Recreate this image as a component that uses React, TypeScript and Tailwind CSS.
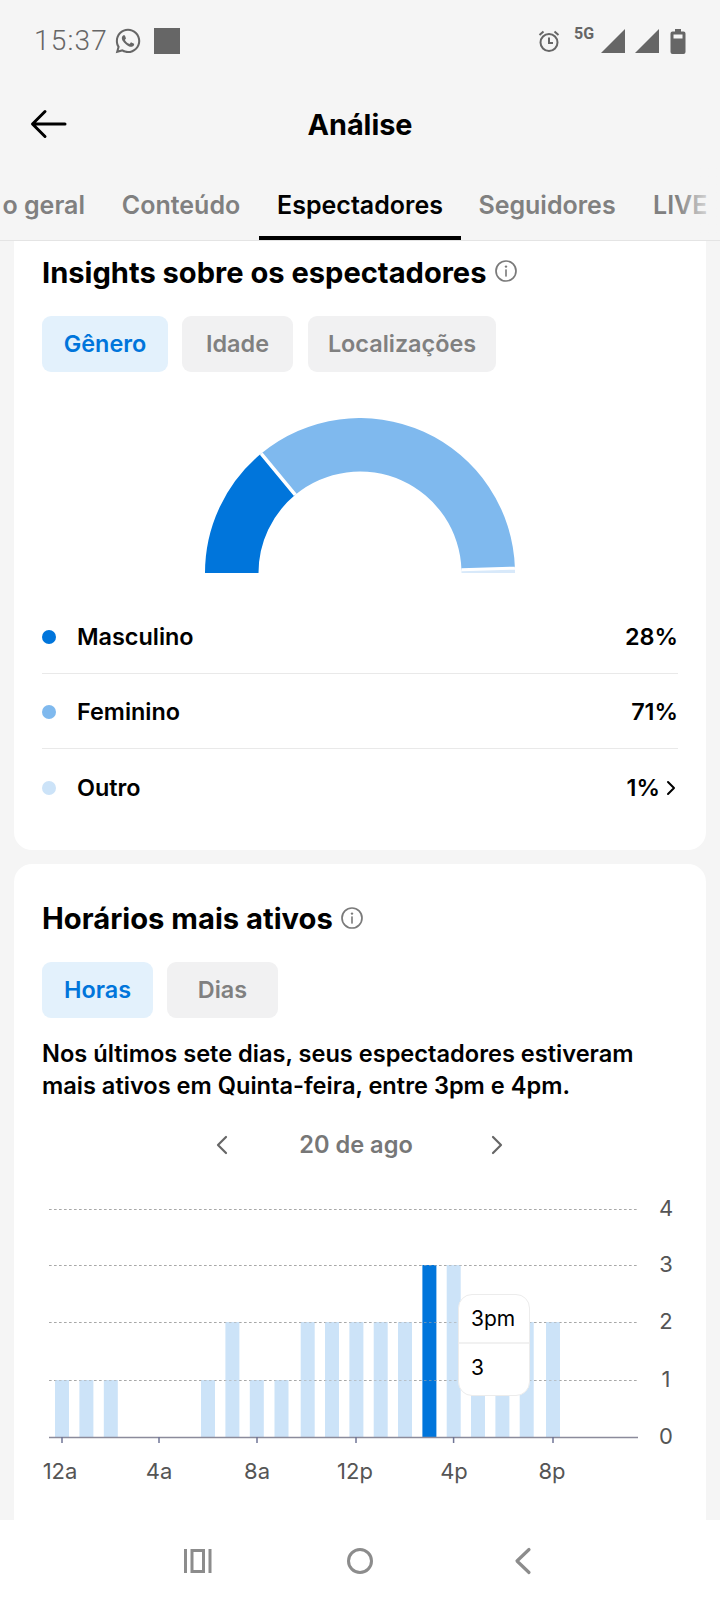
import React from "react";
import { FaWhatsapp } from "react-icons/fa";

const cx = 155;
const cy = 155;
const R = 155;
const r = 101.5;

function seg(fromPct: number, toPct: number) {
  const a0 = Math.PI * (1 - fromPct / 100);
  const a1 = Math.PI * (1 - toPct / 100);
  const p = (rad: number, a: number) => `${(cx + rad * Math.cos(a)).toFixed(2)} ${(cy - rad * Math.sin(a)).toFixed(2)}`;
  return `M${p(r, a0)} L${p(R, a0)} A${R} ${R} 0 0 1 ${p(R, a1)} L${p(r, a1)} A${r} ${r} 0 0 0 ${p(r, a0)} Z`;
}

function InfoIcon() {
  return (
    <svg width="24" height="24" viewBox="0 0 24 24" fill="none" className="shrink-0">
      <circle cx="12" cy="12" r="10" stroke="#7a7a7a" strokeWidth="1.7" />
      <circle cx="12" cy="7.6" r="1.2" fill="#7a7a7a" />
      <rect x="11.2" y="10.4" width="1.6" height="7.2" fill="#7a7a7a" />
    </svg>
  );
}

function Pill({ label, active, w }: { label: string; active?: boolean; w: string }) {
  return (
    <div
      className={
        "h-[56px] rounded-[9px] flex items-center justify-center text-[23.4px] font-semibold " +
        w +
        " " +
        (active ? "bg-[#e3f1fc] text-[#0075db]" : "bg-[#f1f1f2] text-[#808080]")
      }
    >
      {label}
    </div>
  );
}

function LegendRow({ color, label, value, last, chevron }: { color: string; label: string; value: string; last?: boolean; chevron?: boolean }) {
  return (
    <div className={"h-[75px] flex items-center pt-[2px] " + (last ? "" : "border-b border-[#e9e9e9]")}>
      <span className={"w-[14px] h-[14px] rounded-full mr-[21px] " + color} />
      <span className="flex-1 text-[23.4px] font-semibold text-black">{label}</span>
      <span className="text-[23.4px] font-semibold text-black">{value}</span>
      {chevron && (
        <svg width="16" height="18" viewBox="0 0 16 18" fill="none" className="ml-[3px] -mr-[1px]">
          <path d="M5 3l6 6-6 6" stroke="#000" strokeWidth="2" strokeLinecap="round" strokeLinejoin="round" />
        </svg>
      )}
    </div>
  );
}

const bars: [number, number, number][] = [
  [0, 55, 1], [1, 79.4, 1], [2, 103.8, 1], [6, 201, 1], [7, 225.4, 2], [8, 249.8, 1], [9, 274.5, 1], [10, 300.7, 2], [11, 325, 2], [12, 349.4, 2], [13, 373.7, 2], [14, 398, 2], [15, 422.4, 3], [16, 446.7, 3], [17, 471, 2], [18, 495.4, 2], [19, 519.7, 2], [20, 546, 2],
];
const yPos = [1437, 1380, 1322, 1265, 1209];

function Chart() {
  return (
    <div className="relative -mx-[28px] h-[330px]">
      <svg width="692" height="330" viewBox="14 1165 692 330" className="block">
        {yPos.slice(1).map((y) => (
          <line key={y} x1="49" x2="637" y1={y + 0.5} y2={y + 0.5} stroke="#a9a9a9" strokeWidth="1" strokeDasharray="2.5 2.5" />
        ))}
        {bars.map(([i, x, v]) => (
          <rect key={i} x={x} y={yPos[v]} width="14" height={1437 - yPos[v]} fill={i === 15 ? "#0075db" : "#cce3f8"} />
        ))}
        {yPos.slice(1).map((y) => (
          <line key={"o" + y} x1="49" x2="637" y1={y + 0.5} y2={y + 0.5} stroke="#a9a9a9" strokeOpacity="0.6" strokeWidth="1" strokeDasharray="2.5 2.5" />
        ))}
        <line x1="49" x2="638" y1="1437.5" y2="1437.5" stroke="#8b8b9b" strokeWidth="1.5" />
        {[62, 159, 257, 356, 453.6, 553].map((x) => (
          <line key={x} x1={x} x2={x} y1="1437" y2="1443" stroke="#6f7596" strokeWidth="1.5" />
        ))}
        {["0", "1", "2", "3", "4"].map((t, i) => (
          <text key={t} x="666" y={yPos[i] - 1 + 8} textAnchor="middle" fontSize="22" fill="#555" fontFamily="Inter, sans-serif">
            {t}
          </text>
        ))}
        {[["12a", 60], ["4a", 159], ["8a", 257], ["12p", 355], ["4p", 454], ["8p", 552]].map(([t, x]) => (
          <text key={t as string} x={x as number} y="1479" textAnchor="middle" fontSize="22" fill="#555" fontFamily="Inter, sans-serif">
            {t}
          </text>
        ))}
      </svg>
      <div className="absolute left-[444px] top-[129px] w-[72px] h-[102px] bg-white rounded-[14px] border border-[#ececec] flex flex-col text-[21px] text-black">
        <div className="h-[49px] flex items-center pl-[12px] border-b-2 border-[#f1f1f1]">3pm</div>
        <div className="flex-1 flex items-center pl-[12px] pb-[3px]">3</div>
      </div>
    </div>
  );
}

export default function App() {
  return (
    <div className="w-[720px] h-[1600px] bg-[#f5f5f5] flex flex-col overflow-hidden" style={{ fontFamily: "Inter, 'Liberation Sans', sans-serif" }}>
      {/* status bar */}
      <div className="h-[82px] shrink-0 flex items-center text-[#666]">
        <span className="ml-[34px] text-[28px] tracking-[1.2px]" style={{ fontFamily: "Roboto, sans-serif", fontWeight: 300 }}>15:37</span>
        <FaWhatsapp className="ml-[6px] text-[28px]" />
        <span className="ml-[12px] w-[26px] h-[26px] bg-[#666]" />
        <div className="flex-1" />
        <svg width="24" height="24" viewBox="0 0 24 24" fill="none" stroke="#666" strokeWidth="2" className="mr-[13px]">
          <circle cx="12" cy="13.5" r="8.5" />
          <path d="M12 8.5v5.5h4M2.5 6l4-3.5M21.5 6l-4-3.5" />
        </svg>
        <span className="w-[25px] self-start mt-[26px] text-[16px] font-bold leading-[16px] text-[#666]" style={{ fontFamily: "Roboto, sans-serif" }}>5G</span>
        <svg width="24" height="24" viewBox="0 0 24 24" fill="#666" className="ml-[2px]"><path d="M24 0v24H0z" /></svg>
        <svg width="24" height="24" viewBox="0 0 24 24" fill="#666" className="ml-[10px]"><path d="M24 0v24H0z" /></svg>
        <svg width="16" height="25" viewBox="0 0 16 25" fill="#666" className="ml-[11px] mr-[34px]">
          <path d="M5 0h6v2.5h2.5a2 2 0 0 1 2 2V23a2 2 0 0 1-2 2h-11a2 2 0 0 1-2-2V4.500a2 2 0 0 1 2-2H5zM3.500 5.500v4h9v-4z" fillRule="evenodd" />
        </svg>
      </div>
      {/* header */}
      <div className="h-[86px] shrink-0 relative flex items-center justify-center">
        <svg width="38" height="30" viewBox="0 0 38 30" fill="none" stroke="#000" strokeWidth="3" strokeLinecap="round" strokeLinejoin="round" className="absolute left-[30px] top-[27px]">
          <path d="M35 15H3M15 2.500L2.500 15 15 27.500" />
        </svg>
        <span className="text-[28.8px] font-bold text-black">Análise</span>
      </div>
      {/* tabs */}
      <div className="h-[73px] shrink-0 relative flex border-b-[1px] border-[#e4e4e4] overflow-hidden text-[25px] font-semibold text-[#808080]">
        <div className="w-[103px] flex justify-end pr-[18px] pt-[19px]">o geral</div>
        <div className="w-[156px] flex justify-center pt-[19px]">Conteúdo</div>
        <div className="w-[202px] flex justify-center pt-[19px] text-black border-b-[4px] border-black">Espectadores</div>
        <div className="w-[172px] flex justify-center pt-[19px]">Seguidores</div>
        <div className="pl-[20px] pt-[19px]">LIVE</div>
        <div className="absolute right-0 top-0 bottom-0 w-[44px] bg-gradient-to-r from-transparent to-[#f5f5f5]" />
      </div>
      {/* scroll */}
      <div className="flex-1 min-h-0 overflow-hidden px-[14px]">
        <div className="bg-white rounded-b-[18px] px-[28px] pt-[14px] pb-[26px]">
          <div className="flex items-center h-[36px]">
            <span className="text-[29.1px] font-bold text-black">Insights sobre os espectadores</span>
            <span className="ml-[7px] -mt-[5px]"><InfoIcon /></span>
          </div>
          <div className="flex mt-[25px]">
            <Pill label="Gênero" active w="w-[126px]" />
            <Pill label="Idade" w="w-[111px] ml-[14px]" />
            <Pill label="Localizações" w="w-[188px] ml-[15px]" />
          </div>
          <div className="flex justify-center mt-[46px]">
            <svg width="310" height="155" viewBox="0 0 310 155" className="block">
              <path d={seg(0, 28)} fill="#0075db" />
              <path d={seg(28, 99)} fill="#7fb9ee" />
              <path d={seg(99, 100)} fill="#d8e9fa" />
              <path d={seg(28, 28)} fill="none" stroke="#fff" strokeWidth="3.5" />
              <path d={seg(99, 99)} fill="none" stroke="#fff" strokeWidth="3" />
            </svg>
          </div>
          <div className="mt-[26px]">
            <LegendRow color="bg-[#0075db]" label="Masculino" value="28%" />
            <LegendRow color="bg-[#7fb9ee]" label="Feminino" value="71%" />
            <LegendRow color="bg-[#cce3f8]" label="Outro" value="1%" last chevron />
          </div>
        </div>
        <div className="bg-white rounded-t-[18px] mt-[14px] px-[28px] pt-[37px] pb-[40px]">
          <div className="flex items-center h-[36px]">
            <span className="text-[29.2px] font-bold text-black">Horários mais ativos</span>
            <span className="ml-[7px] -mt-[2px]"><InfoIcon /></span>
          </div>
          <div className="flex mt-[25px]">
            <Pill label="Horas" active w="w-[111px]" />
            <Pill label="Dias" w="w-[111px] ml-[14px]" />
          </div>
          <p className="mt-[20px] text-[23.6px] leading-[32px] font-semibold text-black whitespace-nowrap">
            Nos últimos sete dias, seus espectadores estiveram
            <br />
            mais ativos em Quinta-feira, entre 3pm e 4pm.
          </p>
          <div className="mt-[23px] h-[40px] relative flex items-center justify-center text-[23.6px] font-semibold text-[#777]">
            <svg width="16" height="22" viewBox="0 0 16 22" fill="none" stroke="#666" strokeWidth="2.200" strokeLinecap="round" strokeLinejoin="round" className="absolute left-[172px]">
              <path d="M12 3l-8 8 8 8" />
            </svg>
            <span className="mr-[8px]">20 de ago</span>
            <svg width="16" height="22" viewBox="0 0 16 22" fill="none" stroke="#666" strokeWidth="2.200" strokeLinecap="round" strokeLinejoin="round" className="absolute left-[447px]">
              <path d="M4 3l8 8-8 8" />
            </svg>
          </div>
          <Chart />
        </div>
      </div>
      {/* nav */}
      <div className="h-[80px] shrink-0 bg-white relative flex items-center justify-center">
        <svg width="28" height="26" viewBox="0 0 28 26" fill="none" stroke="#8c8c8c" strokeWidth="3" className="absolute left-[184px] top-[28px]">
          <path d="M1.500 1v24M26 1v24" />
          <rect x="8" y="2.500" width="11.500" height="21" />
        </svg>
        <svg width="28" height="28" viewBox="0 0 28 28" fill="none" stroke="#8c8c8c" strokeWidth="3" className="absolute left-[346px] top-[27px]">
          <circle cx="14" cy="14" r="11.500" />
        </svg>
        <svg width="20" height="28" viewBox="0 0 20 28" fill="none" stroke="#8c8c8c" strokeWidth="3.200" strokeLinecap="round" strokeLinejoin="round" className="absolute left-[513px] top-[27px]">
          <path d="M16 2.500L4 14l12 11.500" />
        </svg>
      </div>
    </div>
  );
}
